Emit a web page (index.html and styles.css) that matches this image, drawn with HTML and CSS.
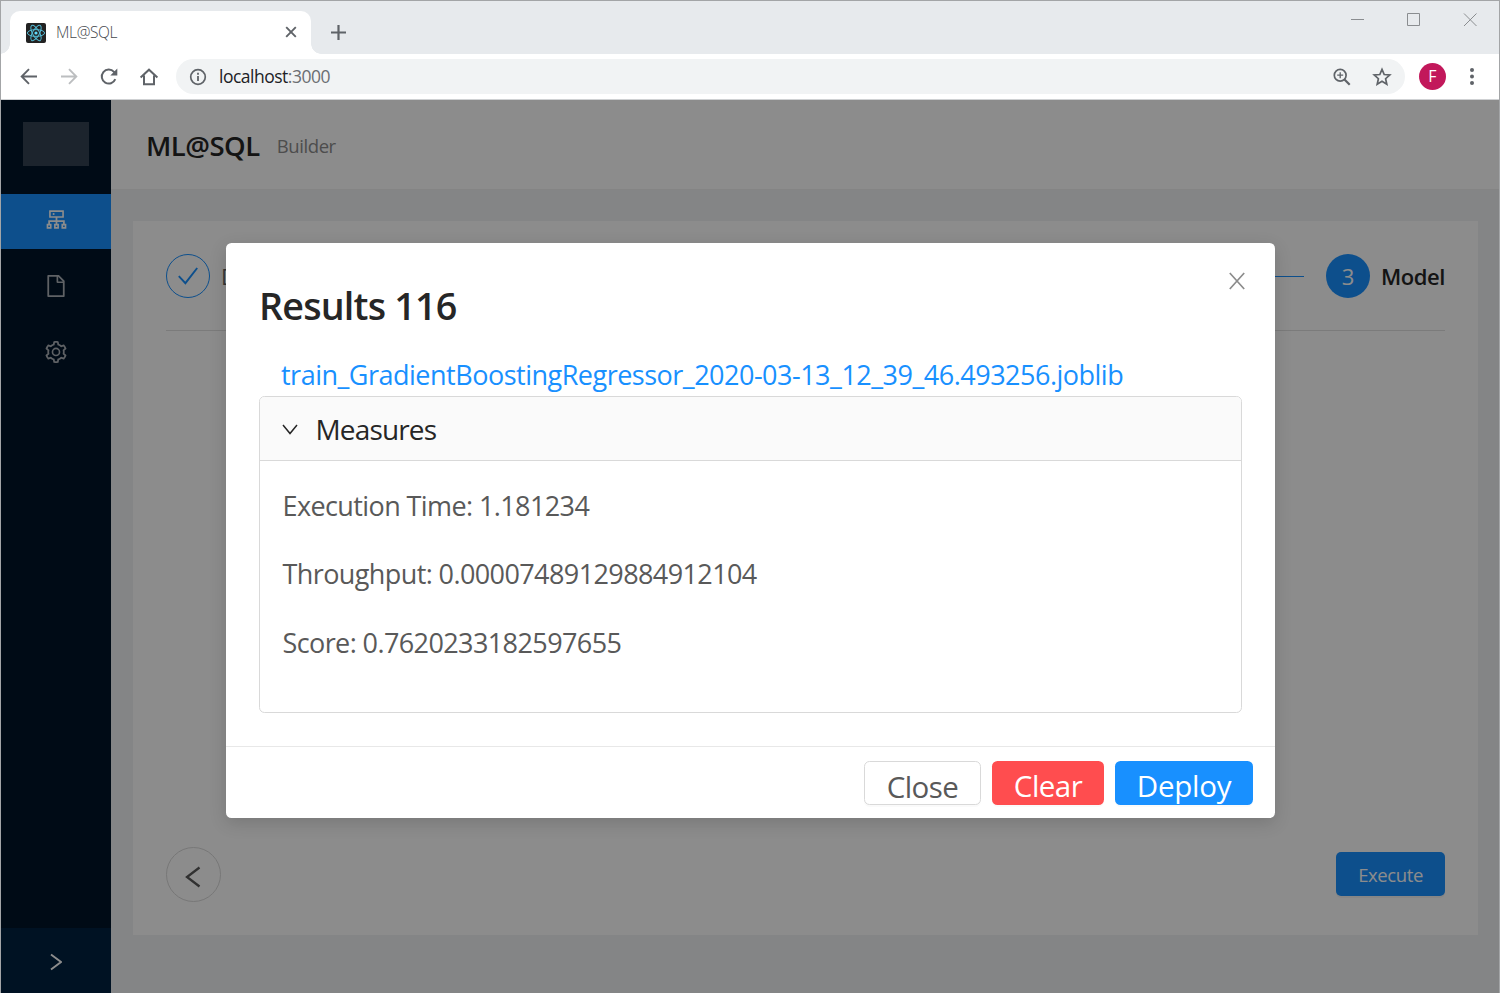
FILE: index.html
```html
<!DOCTYPE html>
<html lang="en">
<head>
<meta charset="utf-8">
<title>ML@SQL</title>
<link rel="stylesheet" href="styles.css">
</head>
<body>
<div class="window">
  <div class="tabstrip">
    <div class="tab">
      <svg class="favicon" viewBox="0 0 20 20"><rect width="20" height="20" rx="2" fill="#222"/><g fill="none" stroke="#53b9d3" stroke-width="1"><ellipse cx="10" cy="10" rx="8.6" ry="3.4"/><ellipse cx="10" cy="10" rx="8.6" ry="3.4" transform="rotate(60 10 10)"/><ellipse cx="10" cy="10" rx="8.6" ry="3.4" transform="rotate(120 10 10)"/></g><circle cx="10" cy="10" r="1.6" fill="#61dafb"/></svg>
      <span class="tab-title">ML@SQL</span>
      <svg class="tab-close" viewBox="0 0 12 12"><path d="M1.2 1.2l9.6 9.6M10.8 1.2l-9.6 9.6" stroke="#5f6368" stroke-width="1.9"/></svg>
    </div>
    <svg class="tab-new" viewBox="0 0 16 16"><path d="M7.500 0v15M0 7.500h15" stroke="#5f6368" stroke-width="2.200"/></svg>
    <div class="window-controls">
      <svg viewBox="0 0 14 14"><path d="M0 7.5h13" stroke="#8a8d90"/></svg>
      <svg viewBox="0 0 14 14"><path d="M.5 1.5h12v12H.5z" fill="none" stroke="#8a8d90"/></svg>
      <svg viewBox="0 0 14 14"><path d="M1 1.500l12.500 12.500M13.500 1.500L1 14" stroke="#8a8d90"/></svg>
    </div>
  </div>
  <div class="toolbar">
    <svg class="nav-icon" viewBox="0 0 20 20"><path d="M18 9.500H3M10 2.200L2.700 9.500l7.300 7.300" fill="none" stroke="#5f6368" stroke-width="1.900"/></svg>
    <svg class="nav-icon" viewBox="0 0 20 20"><path d="M2 9.500h15M10 2.200l7.300 7.300-7.300 7.300" fill="none" stroke="#bcbec0" stroke-width="1.900"/></svg>
    <svg class="nav-icon" viewBox="0 0 20 20"><path d="M16.300 12.200A7 7 0 1 1 15 4.900l1.300 1.400" fill="none" stroke="#5f6368" stroke-width="2"/><path d="M18.300 1.600v7h-7z" fill="#5f6368"/></svg>
    <svg class="nav-icon" viewBox="0 0 20 20"><path d="M1.600 10.400L10 2.700l8.400 7.700M5 8.600v8.600h10V8.600" fill="none" stroke="#5f6368" stroke-width="2"/></svg>
    <div class="omnibox">
      <svg class="info-icon" viewBox="0 0 18 18"><circle cx="9" cy="9" r="7.3" fill="none" stroke="#5f6368" stroke-width="1.7"/><path d="M9 8v5M9 4.8v1.9" stroke="#5f6368" stroke-width="1.8"/></svg>
      <span class="url">localhost<span class="port">:3000</span></span>
      <svg class="zoom-icon" viewBox="0 0 18 18"><circle cx="7.2" cy="7.2" r="5.9" fill="none" stroke="#5f6368" stroke-width="1.7"/><path d="M7.2 4.2v6M4.2 7.2h6" stroke="#5f6368" stroke-width="1.3"/><path d="M11.5 11.5l5.2 5.2" stroke="#5f6368" stroke-width="2.2"/></svg>
      <svg class="star-icon" viewBox="0 0 20 20"><path d="M10 2.4l2.2 5.1 5.6.5-4.2 3.7 1.2 5.5-4.8-2.9-4.8 2.9 1.2-5.5L2.2 8l5.6-.5z" fill="none" stroke="#5f6368" stroke-width="1.7"/></svg>
    </div>
    <span class="avatar">F</span>
    <svg class="kebab" viewBox="0 0 4 18"><g fill="#5f6368"><circle cx="2" cy="2" r="2"/><circle cx="2" cy="8.500" r="2"/><circle cx="2" cy="15" r="2"/></g></svg>
  </div>

  <div class="page">
    <aside class="sider">
      <div class="logo"></div>
      <nav class="menu">
        <a class="menu-item active"><svg class="cluster" viewBox="64 64 896 896"><path fill-rule="evenodd" d="M888 680h-54V540H546v-92h238c8.800 0 16-7.200 16-16V168c0-8.800-7.200-16-16-16H240c-8.800 0-16 7.200-16 16v264c0 8.800 7.200 16 16 16h238v92H190v140h-54c-4.400 0-8 3.600-8 8v176c0 4.400 3.600 8 8 8h176c4.400 0 8-3.600 8-8V688c0-4.400-3.600-8-8-8h-54v-72h220v72h-54c-4.400 0-8 3.600-8 8v176c0 4.400 3.600 8 8 8h176c4.400 0 8-3.600 8-8V688c0-4.400-3.600-8-8-8h-54v-72h220v72h-54c-4.400 0-8 3.600-8 8v176c0 4.400 3.600 8 8 8h176c4.400 0 8-3.600 8-8V688c0-4.400-3.600-8-8-8zM256 808h-64v-64h64zM544 808h-64v-64h64zM832 808h-64v-64h64zM288 384V216h448v168zM360 300a40 40 0 1 0 80 0 40 40 0 1 0-80 0z"/></svg></a>
        <a class="menu-item"><svg viewBox="64 64 896 896"><path d="M854.6 288.6L639.4 73.4c-6-6-14.1-9.4-22.6-9.4H192c-17.7 0-32 14.300-32 32v832c0 17.700 14.300 32 32 32h640c17.700 0 32-14.300 32-32V311.300c0-8.500-3.400-16.700-9.400-22.700zM790.200 326H602V137.800L790.200 326zm1.800 562H232V136h302v216a42 42 0 0 0 42 42h216v494z"/></svg></a>
        <a class="menu-item"><svg viewBox="64 64 896 896"><path d="M924.8 625.700l-65.500-56c3.100-19 4.700-38.400 4.700-57.800s-1.600-38.800-4.700-57.800l65.500-56a32.030 32.030 0 0 0 9.300-35.200l-.9-2.600a443.740 443.740 0 0 0-79.700-137.900l-1.800-2.100a32.120 32.120 0 0 0-35.100-9.500l-81.300 28.900c-30-24.600-63.500-44-99.700-57.600l-15.700-85a32.050 32.050 0 0 0-25.800-25.700l-2.700-.5c-52.100-9.400-106.900-9.400-159 0l-2.700.5a32.050 32.050 0 0 0-25.800 25.700l-15.800 85.400a351.860 351.860 0 0 0-99 57.400l-81.900-29.100a32 32 0 0 0-35.100 9.500l-1.800 2.100a446.020 446.020 0 0 0-79.700 137.900l-.9 2.600c-4.500 12.500-.8 26.500 9.300 35.200l66.300 56.600c-3.100 18.800-4.600 38-4.600 57.100 0 19.200 1.500 38.400 4.600 57.100L99 625.500a32.030 32.030 0 0 0-9.300 35.200l.9 2.600c18.100 50.400 44.900 96.900 79.700 137.900l1.800 2.100a32.120 32.120 0 0 0 35.100 9.500l81.900-29.100c29.800 24.500 63.100 43.900 99 57.400l15.800 85.400a32.050 32.050 0 0 0 25.800 25.700l2.700.5a449.400 449.400 0 0 0 159 0l2.700-.5a32.050 32.050 0 0 0 25.800-25.700l15.700-85a350 350 0 0 0 99.700-57.600l81.300 28.900a32 32 0 0 0 35.100-9.500l1.800-2.100c34.800-41.100 61.600-87.500 79.700-137.900l.9-2.600c4.500-12.300.8-26.300-9.300-35zM788.300 465.900c2.500 15.100 3.800 30.600 3.800 46.100s-1.300 31-3.800 46.100l-6.600 40.100 74.700 63.900a370.030 370.030 0 0 1-42.600 73.600L721 702.800l-31.400 25.800c-23.900 19.600-50.500 35-79.300 45.800l-38.100 14.300-17.900 97a377.500 377.500 0 0 1-85 0l-17.900-97.200-37.800-14.500c-28.500-10.800-55-26.200-78.700-45.700l-31.400-25.900-93.400 33.200c-17-22.900-31.200-47.600-42.600-73.600l75.500-64.500-6.500-40c-2.400-14.900-3.700-30.300-3.700-45.500 0-15.300 1.200-30.600 3.700-45.500l6.500-40-75.500-64.500c11.300-26.100 25.600-50.700 42.600-73.600l93.400 33.200 31.400-25.900c23.700-19.500 50.200-34.900 78.700-45.700l37.900-14.300 17.900-97.200c28.100-3.200 56.800-3.200 85 0l17.900 97 38.100 14.300c28.700 10.800 55.400 26.200 79.300 45.800l31.400 25.800 92.800-32.900c17 22.900 31.200 47.600 42.600 73.600L781.800 426l6.500 39.900z"/><circle cx="512" cy="510" r="144" fill="none" stroke="currentColor" stroke-width="66"/></svg></a>
      </nav>
      <div class="trigger"><svg viewBox="0 0 12 18"><path d="M1 1.500l10 7.500L1 16.500" fill="none" stroke="#fff" stroke-width="1.900"/></svg></div>
    </aside>
    <div class="layout">
      <header class="page-header">
        <h1 class="app-title">ML@SQL</h1>
        <span class="subtitle">Builder</span>
      </header>
      <main class="card">
        <div class="steps">
          <span class="step-icon done"><svg viewBox="0 0 20 18"><path d="M.8 9.200l6.600 7L19.200 1" fill="none" stroke="#1890ff" stroke-width="1.900"/></svg></span>
          <span class="step-title muted">Data</span>
          <span class="step-line"></span>
          <span class="step-icon current">3</span>
          <span class="step-title strong">Model</span>
        </div>
        <div class="actions">
          <button class="back"><svg viewBox="0 0 16 22"><path d="M14.500 1.500L2 11l12.500 9.500" fill="none" stroke="#595959" stroke-width="2.300"/></svg></button>
          <button class="execute">Execute</button>
        </div>
      </main>
    </div>

    <div class="mask">
      <section class="modal">
        <svg class="modal-close" viewBox="0 0 16 18"><path d="M.8 1l14.400 16M15.200 1L.8 17" stroke="#8c8c8c" stroke-width="1.700"/></svg>
        <div class="modal-body">
          <h2 class="results-title">Results 116</h2>
          <a class="model-link">train_GradientBoostingRegressor_2020-03-13_12_39_46.493256.joblib</a>
          <div class="panel">
            <div class="panel-header">
              <svg class="chevron" viewBox="0 0 16 11"><path d="M1 1l7 8.500L15 1" fill="none" stroke="#262626" stroke-width="1.500"/></svg>
              <span class="panel-title">Measures</span>
            </div>
            <div class="panel-content">
              <p class="measure">Execution Time: 1.181234</p>
              <p class="measure">Throughput: 0.00007489129884912104</p>
              <p class="measure">Score: 0.7620233182597655</p>
            </div>
          </div>
        </div>
        <footer class="modal-footer">
          <button class="btn close">Close</button>
          <button class="btn clear">Clear</button>
          <button class="btn deploy">Deploy</button>
        </footer>
      </section>
    </div>
  </div>
</div>
</body>
</html>
```
FILE: styles.css
```css
* { box-sizing: border-box; }
body { margin: 0; font-family: "Open Sans", "Noto Sans", sans-serif; color: rgba(0, 0, 0, .65); }
h1, h2, p { margin: 0; }
button { font-family: inherit; padding: 0; white-space: nowrap; }
svg { display: block; flex: none; }

.window { width: 1500px; height: 993px; display: flex; flex-direction: column; border: 1px solid #a3a5a7; border-bottom: 0; overflow: hidden; background: #fff; }

.tabstrip { height: 53px; flex: none; display: flex; align-items: flex-end; background: #e7eaed; }
.tab { width: 301px; height: 43px; margin-left: 9px; padding: 0 14px 1px 16px; display: flex; align-items: center; background: #fff; border-radius: 10px 10px 0 0; position: relative; }
.tab::before, .tab::after { content: ""; position: absolute; bottom: 0; width: 10px; height: 10px; }
.tab::before { left: -10px; background: radial-gradient(circle at 0 0, #e7eaed 9.500px, #fff 10px); }
.tab::after { right: -10px; background: radial-gradient(circle at 100% 0, #e7eaed 9.500px, #fff 10px); }
.favicon { width: 20px; height: 20px; margin: 1px 10px 0 0; }
.tab-title { font-size: 15.500px; font-weight: 300; color: #45484c; letter-spacing: -.35px; line-height: 22px; }
.tab-close { width: 12px; height: 12px; margin-left: auto; }
.tab-new { width: 16px; height: 16px; margin: 0 0 13px 20px; }
.window-controls { margin: 0 21px 28px auto; display: flex; gap: 42px; }
.window-controls svg { width: 14px; height: 14px; margin: 0 1px 0 -1px; }

.toolbar { height: 46px; flex: none; display: flex; align-items: center; padding: 0 25px 0 18px; border-bottom: 1px solid #cfd1d3; }
.nav-icon { width: 20px; height: 20px; margin-right: 20px; }
.omnibox { flex: none; width: 1229px; height: 35px; margin-left: -3px; display: flex; align-items: center; border-radius: 18px; background: #f1f3f4; padding: 0 13px; }
.info-icon { width: 18px; height: 18px; margin-right: 12px; }
.url { font-size: 17.500px; line-height: 24px; margin-top: -1px; color: #202124; letter-spacing: -.5px; }
.port { color: #6b6e72; }
.zoom-icon { width: 18px; height: 18px; margin-left: auto; margin-right: 21px; }
.star-icon { width: 20px; height: 20px; }
.avatar { width: 27px; height: 27px; margin-left: 14px; border-radius: 50%; background: #c2185b; color: #fff; font-size: 16px; line-height: 27px; text-align: center; }
.kebab { width: 4px; height: 18px; margin-left: auto; }

.page { flex: 1; display: flex; position: relative; min-height: 0; background: #f0f2f5; }
.sider { width: 110px; display: flex; flex-direction: column; background: #001529; }
.logo { width: 66px; height: 44px; margin: 22px 22px 28px; background: rgba(255, 255, 255, .2); }
.menu { display: flex; flex-direction: column; gap: 11px; }
.menu-item { height: 55px; padding-bottom: 3px; display: flex; align-items: center; justify-content: center; color: #adb3b9; }
.menu-item svg { width: 22px; height: 22px; fill: currentColor; }
.menu-item .cluster { width: 23px; height: 23px; margin-bottom: 1px; }
.menu-item.active { background: #1890ff; color: #fff; }
.trigger { height: 65px; margin-top: auto; padding-top: 2px; display: flex; align-items: center; justify-content: center; background: #002140; }
.trigger svg { width: 12px; height: 18px; }

.layout { flex: 1; display: flex; flex-direction: column; }
.page-header { height: 90px; flex: none; display: flex; align-items: center; padding: 3px 35px 0; background: #fff; border-bottom: 1px solid #f0f0f0; }
.app-title { font-size: 27.500px; font-weight: 600; line-height: 44px; color: #262626; letter-spacing: -.5px; }
.subtitle { margin-left: 17px; font-size: 18.500px; line-height: 30px; color: #8c8c8c; letter-spacing: -.4px; }
.card { width: 1345px; height: 714px; margin: 31px 22px 0; padding: 33px; display: flex; flex-direction: column; justify-content: space-between; background: #fff; }
.steps { height: 77px; display: flex; align-items: flex-start; border-bottom: 1px solid #e0e0e0; }
.step-icon { width: 44px; height: 44px; border-radius: 50%; display: flex; align-items: center; justify-content: center; font-size: 22px; line-height: 44px; }
.done { border: 1px solid #1890ff; }
.done svg { width: 20px; height: 18px; }
.current { background: #1890ff; color: #fff; }
.step-title { font-size: 22px; line-height: 44px; margin-left: 11px; }
.strong { font-weight: 600; color: #262626; letter-spacing: -.45px; }
.step-line { flex: 1; height: 1px; margin: 22px 22px 0; background: #1890ff; }
.actions { display: flex; align-items: flex-start; justify-content: space-between; }
.back { width: 55px; height: 55px; border: 1px solid #d9d9d9; border-radius: 50%; background: #fff; padding: 5px 0 0 18px; }
.back svg { width: 16px; height: 22px; }
.execute { width: 109px; height: 44px; margin-top: 5px; border: 0; border-radius: 5px; background: #1890ff; color: #fff; font-size: 18.500px; line-height: 46px; letter-spacing: -.4px; box-shadow: 0 2px 0 rgba(0, 0, 0, .045); }

.mask { position: absolute; inset: 0; background: rgba(0, 0, 0, .45); padding: 143px 0 0 225px; }
.modal { position: relative; width: 1049px; height: 575px; display: flex; flex-direction: column; background: #fff; border-radius: 5.500px; box-shadow: 0 5px 17px rgba(0, 0, 0, .15); }
.modal-close { position: absolute; top: 29px; right: 30px; width: 16px; height: 18px; }
.modal-body { height: 503px; padding: 33px; display: flex; flex-direction: column; }
.results-title { height: 60px; font-size: 37.700px; font-weight: 600; line-height: 59px; letter-spacing: -.8px; color: #262626; }
.model-link { height: 44px; margin: 16px 0 0 22px; font-size: 27px; line-height: 46px; letter-spacing: -.5px; color: #1890ff; white-space: nowrap; }
.panel { height: 317px; border: 1px solid #d9d9d9; border-radius: 5.500px; overflow: hidden; }
.panel-header { height: 64px; display: flex; align-items: center; padding: 2px 0 0 22px; background: #fafafa; border-bottom: 1px solid #d9d9d9; }
.chevron { width: 16px; height: 11px; }
.panel-title { margin-left: 17.500px; font-size: 28px; line-height: 45px; letter-spacing: -.85px; color: #262626; }
.panel-content { padding: 23px 22.500px; display: flex; flex-direction: column; gap: 24.300px; }
.measure { font-size: 27px; line-height: 44px; letter-spacing: -.6px; white-space: nowrap; color: #595959; }
.modal-footer { height: 72px; display: flex; justify-content: flex-end; gap: 11px; padding: 14px 22px; border-top: 1px solid #e8e8e8; }
.btn { height: 44px; border: 0; border-radius: 5.500px; font-size: 29.500px; line-height: 50px; letter-spacing: -.55px; color: #fff; box-shadow: 0 2px 0 rgba(0, 0, 0, .02); }
.close { width: 117px; border: 1px solid #d9d9d9; background: #fff; color: #595959; line-height: 49px; }
.clear { width: 112px; background: #ff4d4f; }
.deploy { width: 138px; background: #1890ff; letter-spacing: -.25px; }
```
